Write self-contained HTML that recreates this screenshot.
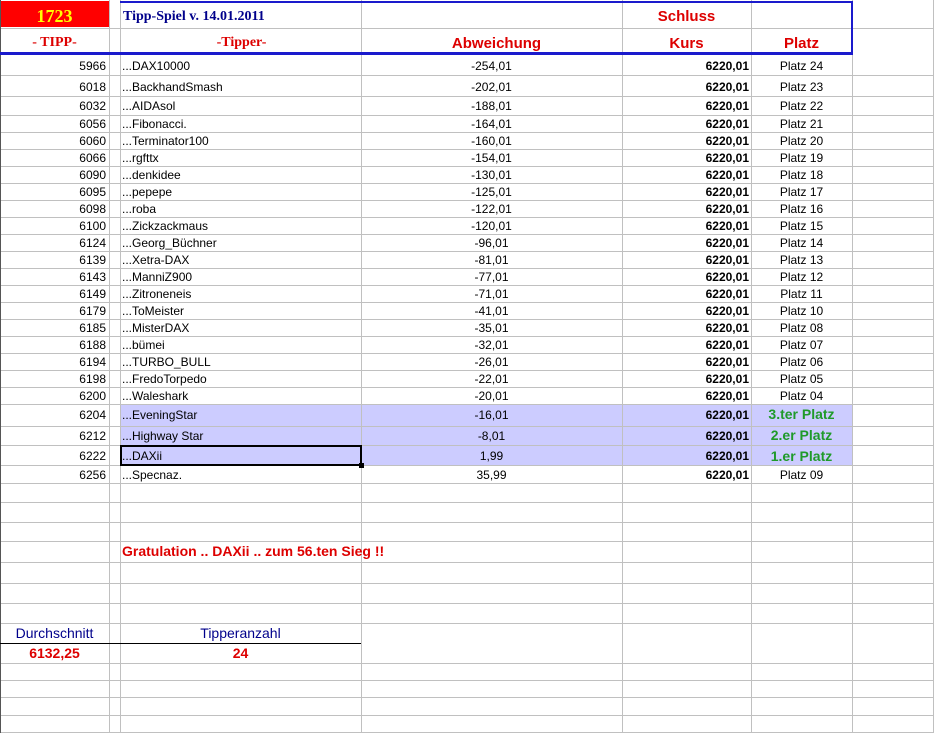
<!DOCTYPE html>
<html><head><meta charset="utf-8">
<style>
*{margin:0;padding:0;box-sizing:border-box}
body{width:935px;height:733px;background:#fff;position:relative;overflow:hidden;font-family:"Liberation Sans",sans-serif;font-size:12px;color:#000}
.h{position:absolute;left:0;width:933px;height:1px;background:#c0c0c0}
.v{position:absolute;top:0;height:733px;width:1px;background:#c0c0c0}
.r{position:absolute;left:0;width:933px;display:flex;align-items:center}
.r>div{height:100%;display:flex;align-items:center;white-space:nowrap}
.a{width:109px;justify-content:flex-end;padding-right:3px}
.s{width:11px}
.b{width:241px;padding-left:2px}
.c{width:261px;justify-content:center}
.d{width:129px;justify-content:flex-end;padding-right:2px;font-weight:bold}
.e{width:101px;justify-content:center}
.g{color:#1f9a2a;font-weight:bold;font-size:14px}
.hl{position:absolute;left:120px;width:732px;background:#ccccff}
</style></head><body>
<div class="hl" style="top:405px;height:60px"></div>
<div class="h" style="top:28px"></div>
<div class="h" style="top:75px"></div><div class="h" style="top:96px"></div><div class="h" style="top:115px"></div>
<div class="h" style="top:132px"></div><div class="h" style="top:149px"></div><div class="h" style="top:166px"></div><div class="h" style="top:183px"></div><div class="h" style="top:200px"></div><div class="h" style="top:217px"></div><div class="h" style="top:234px"></div><div class="h" style="top:251px"></div><div class="h" style="top:268px"></div><div class="h" style="top:285px"></div><div class="h" style="top:302px"></div><div class="h" style="top:319px"></div><div class="h" style="top:336px"></div><div class="h" style="top:353px"></div><div class="h" style="top:370px"></div><div class="h" style="top:387px"></div><div class="h" style="top:404px"></div>
<div class="h" style="top:426px"></div><div class="h" style="top:445px"></div><div class="h" style="top:465px"></div><div class="h" style="top:483px"></div><div class="h" style="top:502px"></div><div class="h" style="top:522px"></div><div class="h" style="top:541px"></div><div class="h" style="top:562px"></div><div class="h" style="top:583px"></div><div class="h" style="top:603px"></div><div class="h" style="top:623px"></div><div class="h" style="top:663px"></div><div class="h" style="top:680px"></div><div class="h" style="top:697px"></div><div class="h" style="top:715px"></div><div class="h" style="top:732px"></div>
<div class="v" style="left:109px"></div><div class="v" style="left:120px"></div><div class="v" style="left:361px"></div><div class="v" style="left:622px"></div><div class="v" style="left:751px"></div><div class="v" style="left:852px"></div><div class="v" style="left:933px"></div>
<div style="position:absolute;left:0;top:0;width:1px;height:733px;background:#555"></div>
<div style="position:absolute;left:1px;top:1px;width:108px;height:26px;background:#f00"></div>
<div style="position:absolute;left:0;top:52px;width:853px;height:3px;background:#1a1acc"></div>
<div style="position:absolute;left:120px;top:1px;width:733px;height:2px;background:#1a1acc"></div>
<div style="position:absolute;left:851px;top:1px;width:2px;height:54px;background:#1a1acc"></div>
<div style="position:absolute;left:0;top:643px;width:361px;height:1px;background:#000"></div>
<div style="position:absolute;left:120px;top:445px;width:242px;height:21px;border:2px solid #000"></div>
<div style="position:absolute;left:359px;top:463px;width:5px;height:5px;background:#000"></div>

<div class="r" style="top:3px;height:27px;font-family:'Liberation Serif',serif;font-weight:bold">
<div style="width:109px;justify-content:center;color:#ff0;font-size:18px">1723</div><div class="s"></div>
<div class="b" style="color:#00008b;font-size:14px;padding-left:3px">Tipp-Spiel v. 14.01.2011</div><div class="c"></div>
<div style="width:129px;justify-content:center;color:#d00;font-family:'Liberation Sans',sans-serif;font-size:15px">Schluss</div></div>
<div class="r" style="top:31px;height:24px;font-weight:bold;color:#d00;font-size:15px">
<div style="width:109px;justify-content:center;font-family:'Liberation Serif',serif;font-size:14px">- TIPP-</div><div class="s"></div>
<div class="b" style="justify-content:center;font-family:'Liberation Serif',serif;font-size:14px">-Tipper-</div>
<div class="c" style="padding-left:10px">Abweichung</div>
<div style="width:129px;justify-content:center">Kurs</div>
<div class="e">Platz</div></div>

<div class="r" style="top:57px;height:18px"><div class="a">5966</div><div class="s"></div><div class="b">...DAX10000</div><div class="c">-254,01</div><div class="d">6220,01</div><div class="e">Platz 24</div></div>
<div class="r" style="top:77px;height:19px"><div class="a">6018</div><div class="s"></div><div class="b">...BackhandSmash</div><div class="c">-202,01</div><div class="d">6220,01</div><div class="e">Platz 23</div></div>
<div class="r" style="top:97px;height:18px"><div class="a">6032</div><div class="s"></div><div class="b">...AIDAsol</div><div class="c">-188,01</div><div class="d">6220,01</div><div class="e">Platz 22</div></div>
<div class="r" style="top:116px;height:16px"><div class="a">6056</div><div class="s"></div><div class="b">...Fibonacci.</div><div class="c">-164,01</div><div class="d">6220,01</div><div class="e">Platz 21</div></div>
<div class="r" style="top:133px;height:16px"><div class="a">6060</div><div class="s"></div><div class="b">...Terminator100</div><div class="c">-160,01</div><div class="d">6220,01</div><div class="e">Platz 20</div></div>
<div class="r" style="top:150px;height:16px"><div class="a">6066</div><div class="s"></div><div class="b">...rgfttx</div><div class="c">-154,01</div><div class="d">6220,01</div><div class="e">Platz 19</div></div>
<div class="r" style="top:167px;height:16px"><div class="a">6090</div><div class="s"></div><div class="b">...denkidee</div><div class="c">-130,01</div><div class="d">6220,01</div><div class="e">Platz 18</div></div>
<div class="r" style="top:184px;height:16px"><div class="a">6095</div><div class="s"></div><div class="b">...pepepe</div><div class="c">-125,01</div><div class="d">6220,01</div><div class="e">Platz 17</div></div>
<div class="r" style="top:201px;height:16px"><div class="a">6098</div><div class="s"></div><div class="b">...roba</div><div class="c">-122,01</div><div class="d">6220,01</div><div class="e">Platz 16</div></div>
<div class="r" style="top:218px;height:16px"><div class="a">6100</div><div class="s"></div><div class="b">...Zickzackmaus</div><div class="c">-120,01</div><div class="d">6220,01</div><div class="e">Platz 15</div></div>
<div class="r" style="top:235px;height:16px"><div class="a">6124</div><div class="s"></div><div class="b">...Georg_Büchner</div><div class="c">-96,01</div><div class="d">6220,01</div><div class="e">Platz 14</div></div>
<div class="r" style="top:252px;height:16px"><div class="a">6139</div><div class="s"></div><div class="b">...Xetra-DAX</div><div class="c">-81,01</div><div class="d">6220,01</div><div class="e">Platz 13</div></div>
<div class="r" style="top:269px;height:16px"><div class="a">6143</div><div class="s"></div><div class="b">...ManniZ900</div><div class="c">-77,01</div><div class="d">6220,01</div><div class="e">Platz 12</div></div>
<div class="r" style="top:286px;height:16px"><div class="a">6149</div><div class="s"></div><div class="b">...Zitroneneis</div><div class="c">-71,01</div><div class="d">6220,01</div><div class="e">Platz 11</div></div>
<div class="r" style="top:303px;height:16px"><div class="a">6179</div><div class="s"></div><div class="b">...ToMeister</div><div class="c">-41,01</div><div class="d">6220,01</div><div class="e">Platz 10</div></div>
<div class="r" style="top:320px;height:16px"><div class="a">6185</div><div class="s"></div><div class="b">...MisterDAX</div><div class="c">-35,01</div><div class="d">6220,01</div><div class="e">Platz 08</div></div>
<div class="r" style="top:337px;height:16px"><div class="a">6188</div><div class="s"></div><div class="b">...bümei</div><div class="c">-32,01</div><div class="d">6220,01</div><div class="e">Platz 07</div></div>
<div class="r" style="top:354px;height:16px"><div class="a">6194</div><div class="s"></div><div class="b">...TURBO_BULL</div><div class="c">-26,01</div><div class="d">6220,01</div><div class="e">Platz 06</div></div>
<div class="r" style="top:371px;height:16px"><div class="a">6198</div><div class="s"></div><div class="b">...FredoTorpedo</div><div class="c">-22,01</div><div class="d">6220,01</div><div class="e">Platz 05</div></div>
<div class="r" style="top:388px;height:16px"><div class="a">6200</div><div class="s"></div><div class="b">...Waleshark</div><div class="c">-20,01</div><div class="d">6220,01</div><div class="e">Platz 04</div></div>
<div class="r" style="top:406px;height:20px;align-items:flex-end"><div class="a" style="padding-bottom:2px">6204</div><div class="s"></div><div class="b" style="padding-bottom:2px">...EveningStar</div><div class="c" style="padding-bottom:2px">-16,01</div><div class="d" style="padding-bottom:2px">6220,01</div><div class="e g" style="align-items:flex-start">3.ter Platz</div></div>
<div class="r" style="top:427px;height:18px;align-items:flex-end"><div class="a" style="padding-bottom:1px">6212</div><div class="s"></div><div class="b" style="padding-bottom:1px">...Highway Star</div><div class="c" style="padding-bottom:1px">-8,01</div><div class="d" style="padding-bottom:1px">6220,01</div><div class="e g" style="align-items:flex-start">2.er Platz</div></div>
<div class="r" style="top:446px;height:19px"><div class="a">6222</div><div class="s"></div><div class="b">...DAXii</div><div class="c">1,99</div><div class="d">6220,01</div><div class="e g">1.er Platz</div></div>
<div class="r" style="top:466px;height:17px"><div class="a">6256</div><div class="s"></div><div class="b">...Specnaz.</div><div class="c">35,99</div><div class="d">6220,01</div><div class="e">Platz 09</div></div>

<div style="position:absolute;left:122px;top:543px;color:#d00;font-weight:bold;font-size:14px;white-space:nowrap">Gratulation .. DAXii .. zum 56.ten Sieg !!</div>
<div style="position:absolute;left:0;top:625px;width:109px;text-align:center;color:#00008b;font-size:14px">Durchschnitt</div>
<div style="position:absolute;left:120px;top:625px;width:241px;text-align:center;color:#00008b;font-size:14px">Tipperanzahl</div>
<div style="position:absolute;left:0;top:645px;width:109px;text-align:center;color:#d00;font-weight:bold;font-size:14px">6132,25</div>
<div style="position:absolute;left:120px;top:645px;width:241px;text-align:center;color:#d00;font-weight:bold;font-size:14px">24</div>
</body></html>
